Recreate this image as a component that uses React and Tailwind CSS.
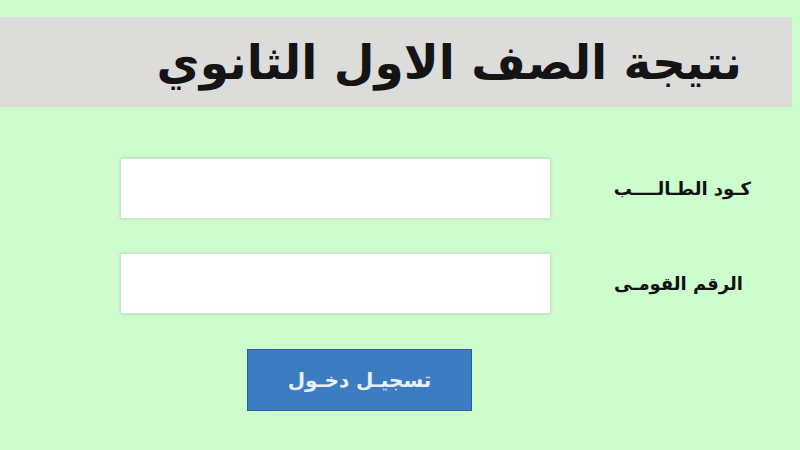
import React from 'react';

const arabic = { fontFamily: '"DejaVu Sans", "Noto Sans", sans-serif' };

function Field({ label, pad }) {
  return (
    <div className="flex items-center">
      <input
        type="text"
        className="ml-[120px] w-[431px] h-[61px] bg-white border border-[#d4ddd4] rounded-[2px] shadow-[0_0_3px_rgba(0,0,0,0.12)] outline-none"
      />
      <div className={`flex-1 flex justify-end ${pad}`}>
        <span dir="rtl" className="text-[18px] font-bold text-[#111]" style={arabic}>
          {label}
        </span>
      </div>
    </div>
  );
}

export default function App() {
  return (
    <div className="w-[800px] h-[450px] bg-[#cdfccd] pt-[17px] overflow-hidden">
      {/* title band */}
      <div className="h-[90px] mr-[8px] bg-[#dcdcdb] flex items-center justify-end pr-[50px]">
        <h1 dir="rtl" className="text-[47px] font-bold text-[#141414] leading-none" style={arabic}>
          نتيجة الصف الاول الثانوي
        </h1>
      </div>

      <div className="mt-[51px] flex flex-col gap-[34px]">
        <Field label="كـود الطـالــــب" pad="pr-[49px]" />
        <Field label="الرقم القومـى" pad="pr-[57px]" />
      </div>

      <div className="mt-[35px] ml-[247px]">
        <button
          dir="rtl"
          className="w-[225px] h-[62px] bg-[#3e7cc1] border border-[#2d5d94] text-[#e6f0fa] text-[20px] font-bold"
          style={arabic}
        >
          تسجيـل دخـول
        </button>
      </div>
    </div>
  );
}
